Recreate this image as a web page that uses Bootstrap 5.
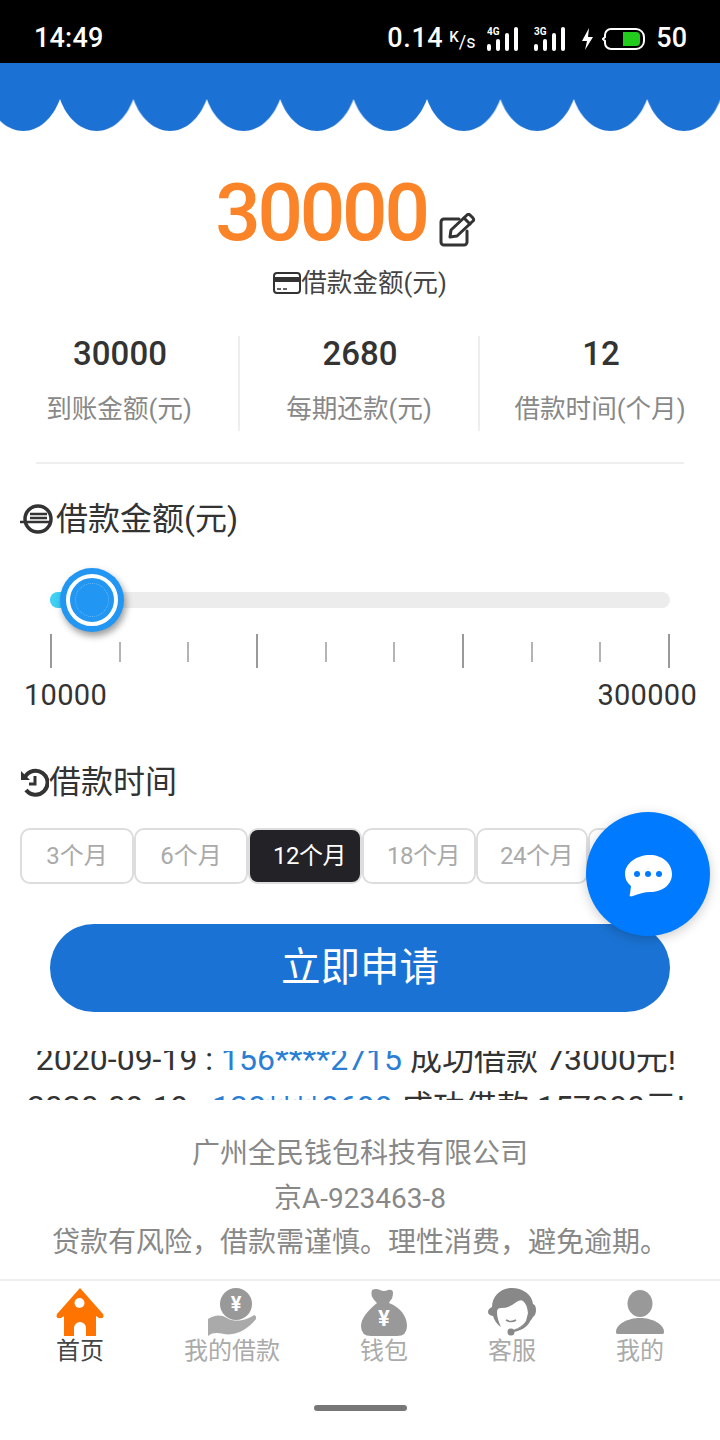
<!DOCTYPE html>
<html lang="zh-CN">
<head>
  <meta charset="UTF-8">
  <title>借款</title>
  <meta name="viewport" content="width=device-width, initial-scale=1">
  <link href="https://cdn.jsdelivr.net/npm/bootstrap@5.3.3/dist/css/bootstrap.min.css" rel="stylesheet">
  <style>
    html, body { background: #fff; }
    body { font-family: Roboto, "Noto Sans CJK SC", sans-serif; color: #333; width: 720px; height: 1440px; overflow: hidden; position: relative; }
    svg { display: block; flex: none; }

    .status-bar { height: 63px; background: #000; color: #fff; padding: 14px 33px 0 34px; font-weight: 500; }
    .status-time { font-size: 27px; letter-spacing: .2px; }
    .status-speed { font-size: 27px; letter-spacing: .6px; margin-right: 6px; }
    .status-unit { font-size: 15px; width: 38px; line-height: 1; margin-top: -6px; }
    .status-unit i { font-style: normal; font-size: 18px; position: relative; top: 6px; font-weight: 400; }
    .status-num { font-size: 27px; margin-left: 11px; }

    .amount-row { margin-top: 42px; height: 80px; padding-right: 29px; }
    .amount-num { font-size: 80px; line-height: 80px; font-weight: 500; color: #fa8427; letter-spacing: -3.2px; }
    .amount-edit { margin: 34px 0 0 12px; }
    .amount-cap { height: 40px; margin-top: 10px; font-size: 25.6px; line-height: 40px; color: #444; }

    .stats-row { margin-top: 33px; height: 95px; }
    .stat-cell { width: 240px; text-align: center; border-right: 2px solid #eee; }
    .stat-cell:last-child { border-right: 0; }
    .stat-val { font-size: 33px; line-height: 36px; font-weight: 500; color: #333; padding-left: 2px; }
    .stat-lbl { font-size: 25.6px; line-height: 40px; margin-top: 17px; color: #888; }
    .stats-line { height: 2px; background: #eee; margin: 31px 36px 0; }

    .sec-title { font-size: 32px; line-height: 40px; color: #333; padding-left: 20px; }
    .sec-title.first { margin-top: 35px; }
    .sec-title.second { margin-top: 49px; }
    .slider-wrap { position: relative; height: 16px; margin: 53px 50px 0; background: #ececec; border-radius: 8px; }
    .slider-fill { height: 16px; background: #3fd0f5; border-radius: 8px; }
    .slider-thumb { position: absolute; left: 10px; top: -24px; width: 64px; height: 64px; border-radius: 50%; background: #2196f3; box-shadow: 2px 4px 7px rgba(0,0,0,.4); display: flex; align-items: center; justify-content: center; }
    .slider-ring { width: 52px; height: 52px; border-radius: 50%; border: 4px solid #fff; background: #2196f3; display: flex; align-items: center; justify-content: center; }
    .slider-core { width: 34px; height: 34px; border-radius: 50%; border: 1px dotted #6bb8f5; }
    .tick-row { margin: 26px 50px 0; height: 34px; }
    .tick-mark { width: 2px; height: 20px; background: #b4b4b4; }
    .tick-mark.tall { height: 34px; background: #999; }
    .range-row { padding: 0 23px 0 24px; margin-top: 9px; font-size: 29px; line-height: 36px; color: #333; letter-spacing: .3px; }

    .term-row { margin: 26px 0 0 20px; width: 678px; height: 56px; }
    .term-btn { flex: 0 0 114px; height: 56px; padding: 0; border: 2px solid #ddd; border-radius: 10px; background: #fff; color: #aaa; font-size: 24px; line-height: 52px; text-align: center; }
    .term-btn.wide { padding-left: 9px; letter-spacing: -.5px; }
    .term-btn.narrow { flex-basis: 112px; }
    .term-btn.tail { flex-basis: 110px; }
    .term-btn.on { background: #232226; color: #fff; }
    .apply-btn { display: block; width: 620px; height: 88px; margin: 40px auto 0; background: #1a73d4; border: 0; border-radius: 44px; color: #fff; font-size: 39.5px; }

    .chat-fab { position: absolute; left: 586px; top: 812px; width: 124px; height: 124px; padding-top: 4px; border-radius: 50%; background: #007bff; box-shadow: 0 3px 12px rgba(0,0,0,.2); display: flex; align-items: center; justify-content: center; }

    .ticker-box { height: 49px; margin-top: 39px; padding-right: 8px; overflow: hidden; text-align: center; font-size: 32px; line-height: 48px; color: #333; white-space: nowrap; }
    .ticker-list { transform: translateY(-16px); }
    .ticker-list span { color: #2a7fd5; }

    .foot-info { margin-top: 32px; text-align: center; font-size: 28px; line-height: 44.5px; color: #888; }
    .tab-bar { position: absolute; left: 0; right: 0; top: 1279px; border-top: 2px solid #eee; padding-top: 7px; display: grid; grid-template-columns: 160px 144px 160px 96px 160px; }
    .tab-item { display: flex; flex-direction: column; align-items: center; font-size: 24px; line-height: 30px; color: #aaa; }
    .tab-item.on { color: #444; }
    .home-bar { position: absolute; left: 314px; top: 1405px; width: 93px; height: 6px; border-radius: 3px; background: #777; }
  </style>
</head>
<body>

  <div class="status-bar d-flex align-items-center">
    <div class="status-time">14:49</div>
    <div class="ms-auto d-flex align-items-center">
      <div class="status-speed">0.14</div>
      <div class="status-unit">K<i>/s</i></div>
      <svg width="31" height="26" viewBox="0 0 31 26"><text x="0" y="9" font-size="10" font-weight="700" fill="#fff" font-family="Roboto">4G</text><rect x="0" y="18" width="4" height="7" rx="2" fill="#fff"/><rect x="9" y="13" width="4" height="12" rx="2" fill="#fff"/><rect x="18" y="7" width="4" height="18" rx="2" fill="#fff"/><rect x="27" y="1" width="4" height="24" rx="2" fill="#fff"/></svg>
      <svg class="ms-3" width="31" height="26" viewBox="0 0 31 26"><text x="0" y="9" font-size="10" font-weight="700" fill="#fff" font-family="Roboto">3G</text><rect x="0" y="18" width="4" height="7" rx="2" fill="#fff"/><rect x="9" y="13" width="4" height="12" rx="2" fill="#fff"/><rect x="18" y="7" width="4" height="18" rx="2" fill="#fff"/><rect x="27" y="1" width="4" height="24" rx="2" fill="#fff"/></svg>
      <svg class="ms-3" width="13" height="22" viewBox="0 0 13 22"><path d="M8 0 1 13h5l-2 9 8-13H7z" fill="#fff"/></svg>
      <svg class="ms-2" width="43" height="22" viewBox="0 0 43 22"><path d="M9 1h25a8 8 0 0 1 8 8v4a8 8 0 0 1-8 8H9a6 6 0 0 1-6-6V13L1 11l2-2V7a6 6 0 0 1 6-6z" fill="none" stroke="#fff" stroke-width="2"/><path d="M21 4h13a4 4 0 0 1 4 4v6a4 4 0 0 1-4 4H21z" fill="#22cc1c"/></svg>
      <div class="status-num">50</div>
    </div>
  </div>

  <svg width="720" height="68" viewBox="0 0 720 68">
    <defs>
      <pattern id="scallop" x="-13.4" y="0" width="73.4" height="68" patternUnits="userSpaceOnUse">
        <path d="M0 0H73.4V36C66 56 52 68 36.700 68S7 56 0 36Z" fill="#1c72d4"/>
      </pattern>
    </defs>
    <rect width="720" height="68" fill="url(#scallop)"/>
  </svg>

  <div class="amount-row d-flex justify-content-center align-items-center">
    <div class="amount-num">30000</div>
    <svg class="amount-edit" width="37" height="34" viewBox="0 0 37 34" fill="none" stroke="#333" stroke-width="3" stroke-linejoin="round" stroke-linecap="round"><path d="M28 18v11a3 3 0 0 1-3 3H5a3 3 0 0 1-3-3V9a3 3 0 0 1 3-3h15"/><path d="M11 24l1-7L28 2a2 2 0 0 1 3 0l3 3a2 2 0 0 1 0 3L18 23z"/><path d="M25 5l6 6"/></svg>
  </div>
  <div class="amount-cap d-flex justify-content-center align-items-center">
    <svg width="28" height="22" viewBox="0 0 28 22"><rect x="1" y="1" width="26" height="20" rx="3" fill="none" stroke="#333" stroke-width="2"/><rect x="1" y="5" width="26" height="5" fill="#333"/><path d="M4 17h4M10 17h4" stroke="#333" stroke-width="1.5"/></svg>
    <span>借款金额(元)</span>
  </div>

  <div class="stats-row d-flex">
    <div class="stat-cell"><div class="stat-val">30000</div><div class="stat-lbl">到账金额(元)</div></div>
    <div class="stat-cell"><div class="stat-val">2680</div><div class="stat-lbl">每期还款(元)</div></div>
    <div class="stat-cell"><div class="stat-val">12</div><div class="stat-lbl">借款时间(个月)</div></div>
  </div>
  <div class="stats-line"></div>

  <div class="sec-title first d-flex align-items-center">
    <svg width="36" height="32" viewBox="0 0 36 32" fill="none" stroke="#333"><circle cx="18" cy="16" r="13" stroke-width="3.5"/><path d="M0 19h30M10 11h17M10 15h17" stroke-width="2.5"/></svg>
    <span>借款金额(元)</span>
  </div>

  <div class="slider-wrap">
    <div class="slider-fill" style="width: 42px"></div>
    <div class="slider-thumb"><div class="slider-ring"><div class="slider-core"></div></div></div>
  </div>
  <div class="tick-row d-flex justify-content-between align-items-start">
    <div class="tick-mark tall"></div>
    <div class="tick-mark mt-2"></div>
    <div class="tick-mark mt-2"></div>
    <div class="tick-mark tall"></div>
    <div class="tick-mark mt-2"></div>
    <div class="tick-mark mt-2"></div>
    <div class="tick-mark tall"></div>
    <div class="tick-mark mt-2"></div>
    <div class="tick-mark mt-2"></div>
    <div class="tick-mark tall"></div>
  </div>
  <div class="range-row d-flex justify-content-between"><span>10000</span><span>300000</span></div>

  <div class="sec-title second d-flex align-items-center">
    <svg width="29" height="30" viewBox="0 0 29 30" fill="none" stroke="#333" stroke-width="4"><path d="M5 10A12 12 0 1 1 6 23"/><path d="M1 4v9h9" fill="#333" stroke="none"/><path d="M15 9v8h-6" stroke-width="3"/></svg>
    <span>借款时间</span>
  </div>

  <div class="term-row d-flex">
    <div class="term-btn">3个月</div>
    <div class="term-btn">6个月</div>
    <div class="term-btn wide on">12个月</div>
    <div class="term-btn wide">18个月</div>
    <div class="term-btn wide narrow">24个月</div>
    <div class="term-btn wide tail">36个月</div>
  </div>

  <button type="button" class="btn apply-btn">立即申请</button>

  <div class="ticker-box">
    <div class="ticker-list">
      <div>2020-09-19 : <span>156****2715</span> 成功借款 73000元!</div>
      <div>2020-09-19 : <span>138****9699</span> 成功借款 157000元!</div>
    </div>
  </div>

  <div class="foot-info">
    <div>广州全民钱包科技有限公司</div>
    <div>京A-923463-8</div>
    <div>贷款有风险，借款需谨慎。理性消费，避免逾期。</div>
  </div>

  <div class="chat-fab">
    <svg width="48" height="42" viewBox="0 0 48 42"><path d="M26 0C38 0 48 8 48 19S38 37 26 37c-5 0-12 2-17 4-3 1-4 0-3-2l1-8C3 28 1 24 1 19 1 8 13 0 26 0z" fill="#fff"/><circle cx="13" cy="19" r="3" fill="#007bff"/><circle cx="24" cy="19" r="3" fill="#007bff"/><circle cx="35" cy="19" r="3" fill="#007bff"/></svg>
  </div>

  <div class="tab-bar">
    <div class="tab-item on">
      <svg width="48" height="48" viewBox="0 0 48 48"><path d="M24 0 47 26q2 5-4 4l-3-2v20H30v-8a6 6 0 0 0-12 0v8H8V28l-3 2q-6 1-4-4z" fill="#ff7300"/><circle cx="23.500" cy="15" r="5" fill="#fff"/></svg>
      <div>首页</div>
    </div>
    <div class="tab-item">
      <svg width="48" height="48" viewBox="0 0 48 48"><circle cx="28" cy="16" r="16" fill="#999"/><text x="28" y="23" text-anchor="middle" font-size="20" font-weight="700" fill="#fff" font-family="Roboto">¥</text><path d="M0 31C6 27 13 26 19 30c8 5 20 2 27-3q3 1 2 4C39 42 28 48 16 46 10 45 5 44 0 48z" fill="#aaa"/></svg>
      <div>我的借款</div>
    </div>
    <div class="tab-item">
      <svg width="47" height="48" viewBox="0 0 47 48"><path d="M11 2q4-2 8 0 4 2 8 0 5-1 5 3 0 5-3 8l-1 2C39 19 46 28 46 38q0 10-10 10H10Q0 48 0 38 0 28 16 15l-2-2Q9 8 11 2z" fill="#999"/><text x="23" y="38" text-anchor="middle" font-size="22" font-weight="700" fill="#fff" font-family="Roboto">¥</text></svg>
      <div>钱包</div>
    </div>
    <div class="tab-item">
      <svg width="48" height="48" viewBox="0 0 48 48"><path d="M24 0C12 0 4 9 4 19q-4 2-4 5 0 3 5 4 2 7 8 11-4-8-4-15 0-4 4-4 8 0 14-5 5-4 8-2 4 3 5 12l-2 8q-4 6-11 8 8-1 13-7 4-2 5-5 3-2 3-7t-3-6C44 6 34 0 24 0z" fill="#888"/><path d="M18 32q5 3 10 0" fill="none" stroke="#888" stroke-width="1.500"/><path d="M42 30q-2 10-17 13" fill="none" stroke="#888" stroke-width="2"/><circle cx="23" cy="44" r="3.500" fill="#888"/></svg>
      <div>客服</div>
    </div>
    <div class="tab-item">
      <svg width="48" height="48" viewBox="0 0 48 48"><ellipse cx="24" cy="15.500" rx="12.500" ry="13.500" fill="#999"/><path d="M0 44C0 36 12 30 24 30s24 6 24 14c0 2-1 2-3 2H3c-2 0-3 0-3-2z" fill="#999"/></svg>
      <div>我的</div>
    </div>
  </div>

  <div class="home-bar"></div>

  <script src="https://cdn.jsdelivr.net/npm/bootstrap@5.3.3/dist/js/bootstrap.bundle.min.js"></script>
</body>
</html>
